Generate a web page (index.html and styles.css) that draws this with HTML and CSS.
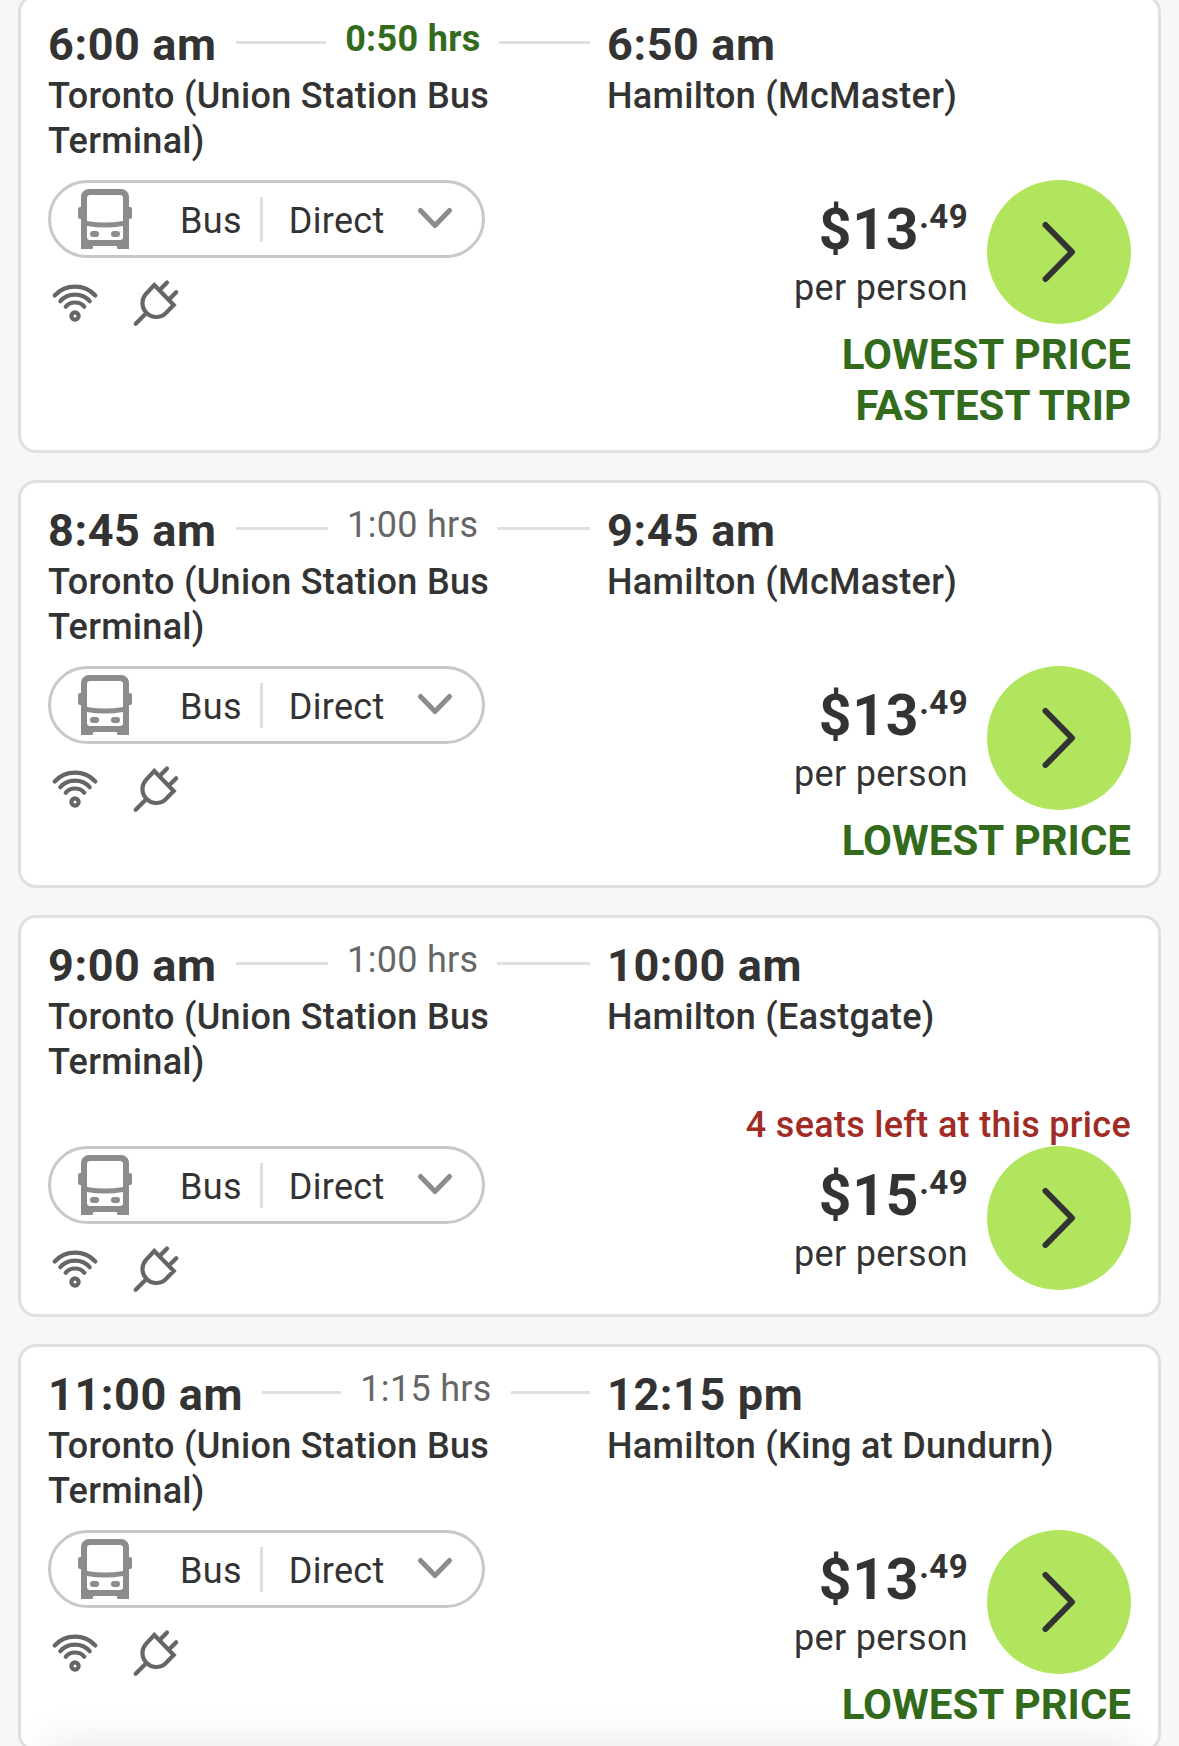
FILE: index.html
```
<!DOCTYPE html>
<html lang="en">
<head>
    <meta charset="UTF-8">
    <meta name="viewport" content="width=device-width, initial-scale=1.0">
    <title>Toronto to Hamilton</title>
    <link rel="stylesheet" href="styles.css">
</head>
<body>
    <svg class="sprite" aria-hidden="true">
        <symbol id="icon-bus" viewBox="0 0 54 60">
            <path fill="currentColor" fill-rule="evenodd" d="M3 8a8 8 0 0 1 8-8h32a8 8 0 0 1 8 8v10h1a2 2 0 0 1 2 2v8a2 2 0 0 1-2 2h-1v30h-10.500a1.500 1.500 0 0 1-1.500-1.500V57H15v1.500a1.500 1.500 0 0 1-1.500 1.500H3V30H2a2 2 0 0 1-2-2v-8a2 2 0 0 1 2-2h1zM9 9v23q18 3 36 0V9a3 3 0 0 0-3-3H12a3 3 0 0 0-3 3zM9 37v11a3 3 0 0 0 3 3h30a3 3 0 0 0 3-3V37q-18 3-36 0z"/>
            <rect x="12" y="42" width="9" height="6" rx="3" fill="currentColor"/>
            <rect x="33" y="42" width="9" height="6" rx="3" fill="currentColor"/>
        </symbol>
        <symbol id="icon-wifi" viewBox="0 0 54 48">
            <g fill="none" stroke="currentColor" stroke-width="4.200" stroke-linecap="round">
                <path d="M6.700 16.500Q15 7.700 27 7.700t20.300 8.800"/>
                <path d="M12.300 22.200Q18 15.700 27 15.700t14.700 6.500"/>
                <path d="M17.700 27.700Q21 23.500 27 23.500t9.300 4.200"/>
                <circle cx="27" cy="37" r="3.600"/>
            </g>
        </symbol>
        <symbol id="icon-plug" viewBox="0 0 48 48">
            <path fill="none" stroke="currentColor" stroke-width="4.200" stroke-linecap="round" d="M22.300 6l19.400 20-8 8.200c-5.500 5.200-13.700 5-19-.2s-5.700-13.500-.7-19.200zM14.200 34.200L3.700 44.700M28.700 10L35 3.500M37.700 19.800l6.500-6.600"/>
        </symbol>
        <symbol id="icon-down" viewBox="0 0 36 24">
            <path fill="none" stroke="currentColor" stroke-width="5" stroke-linecap="round" stroke-linejoin="round" d="M3.500 3.500L18 18.500l14.500-15"/>
        </symbol>
        <symbol id="icon-next" viewBox="0 0 36 66">
            <path fill="none" stroke="currentColor" stroke-width="6" stroke-linecap="round" stroke-linejoin="round" d="M4.500 6l26.500 27-26.500 27"/>
        </symbol>
    </svg>

    <main class="results">
        <section class="trip">
            <div class="route">
                <div class="departure">
                    <div class="time-row">
                        <span class="time">6:00 am</span>
                        <span class="line"></span>
                        <span class="duration fastest">0:50 hrs</span>
                        <span class="line"></span>
                    </div>
                    <p class="place">Toronto (Union Station Bus Terminal)</p>
                </div>
                <div class="arrival">
                    <span class="time">6:50 am</span>
                    <p class="place">Hamilton (McMaster)</p>
                </div>
            </div>
            <div class="details">
                <div class="info">
                    <button class="vehicle">
                        <svg class="bus"><use href="#icon-bus"/></svg>
                        <span class="type">Bus</span>
                        <span class="stops">Direct</span>
                        <svg class="down"><use href="#icon-down"/></svg>
                    </button>
                    <div class="amenities">
                        <svg class="wifi"><use href="#icon-wifi"/></svg>
                        <svg class="plug"><use href="#icon-plug"/></svg>
                    </div>
                </div>
                <div class="fare">
                    <div class="fare-row">
                        <div class="price-box">
                            <div class="price">$13<span class="cents">.49</span></div>
                            <div class="per">per person</div>
                        </div>
                        <button class="next"><svg><use href="#icon-next"/></svg></button>
                    </div>
                    <div class="labels">
                        <div>LOWEST PRICE</div>
                        <div>FASTEST TRIP</div>
                    </div>
                </div>
            </div>
        </section>

        <section class="trip">
            <div class="route">
                <div class="departure">
                    <div class="time-row">
                        <span class="time">8:45 am</span>
                        <span class="line"></span>
                        <span class="duration">1:00 hrs</span>
                        <span class="line"></span>
                    </div>
                    <p class="place">Toronto (Union Station Bus Terminal)</p>
                </div>
                <div class="arrival">
                    <span class="time">9:45 am</span>
                    <p class="place">Hamilton (McMaster)</p>
                </div>
            </div>
            <div class="details">
                <div class="info">
                    <button class="vehicle">
                        <svg class="bus"><use href="#icon-bus"/></svg>
                        <span class="type">Bus</span>
                        <span class="stops">Direct</span>
                        <svg class="down"><use href="#icon-down"/></svg>
                    </button>
                    <div class="amenities">
                        <svg class="wifi"><use href="#icon-wifi"/></svg>
                        <svg class="plug"><use href="#icon-plug"/></svg>
                    </div>
                </div>
                <div class="fare">
                    <div class="fare-row">
                        <div class="price-box">
                            <div class="price">$13<span class="cents">.49</span></div>
                            <div class="per">per person</div>
                        </div>
                        <button class="next"><svg><use href="#icon-next"/></svg></button>
                    </div>
                    <div class="labels">
                        <div>LOWEST PRICE</div>
                    </div>
                </div>
            </div>
        </section>

        <section class="trip">
            <div class="route">
                <div class="departure">
                    <div class="time-row">
                        <span class="time">9:00 am</span>
                        <span class="line"></span>
                        <span class="duration">1:00 hrs</span>
                        <span class="line"></span>
                    </div>
                    <p class="place">Toronto (Union Station Bus Terminal)</p>
                </div>
                <div class="arrival">
                    <span class="time">10:00 am</span>
                    <p class="place">Hamilton (Eastgate)</p>
                </div>
            </div>
            <p class="seats">4 seats left at this price</p>
            <div class="details">
                <div class="info">
                    <button class="vehicle">
                        <svg class="bus"><use href="#icon-bus"/></svg>
                        <span class="type">Bus</span>
                        <span class="stops">Direct</span>
                        <svg class="down"><use href="#icon-down"/></svg>
                    </button>
                    <div class="amenities">
                        <svg class="wifi"><use href="#icon-wifi"/></svg>
                        <svg class="plug"><use href="#icon-plug"/></svg>
                    </div>
                </div>
                <div class="fare">
                    <div class="fare-row">
                        <div class="price-box">
                            <div class="price">$15<span class="cents">.49</span></div>
                            <div class="per">per person</div>
                        </div>
                        <button class="next"><svg><use href="#icon-next"/></svg></button>
                    </div>
                </div>
            </div>
        </section>

        <section class="trip">
            <div class="route">
                <div class="departure">
                    <div class="time-row">
                        <span class="time">11:00 am</span>
                        <span class="line"></span>
                        <span class="duration">1:15 hrs</span>
                        <span class="line"></span>
                    </div>
                    <p class="place">Toronto (Union Station Bus Terminal)</p>
                </div>
                <div class="arrival">
                    <span class="time">12:15 pm</span>
                    <p class="place">Hamilton (King at Dundurn)</p>
                </div>
            </div>
            <div class="details">
                <div class="info">
                    <button class="vehicle">
                        <svg class="bus"><use href="#icon-bus"/></svg>
                        <span class="type">Bus</span>
                        <span class="stops">Direct</span>
                        <svg class="down"><use href="#icon-down"/></svg>
                    </button>
                    <div class="amenities">
                        <svg class="wifi"><use href="#icon-wifi"/></svg>
                        <svg class="plug"><use href="#icon-plug"/></svg>
                    </div>
                </div>
                <div class="fare">
                    <div class="fare-row">
                        <div class="price-box">
                            <div class="price">$13<span class="cents">.49</span></div>
                            <div class="per">per person</div>
                        </div>
                        <button class="next"><svg><use href="#icon-next"/></svg></button>
                    </div>
                    <div class="labels">
                        <div>LOWEST PRICE</div>
                    </div>
                </div>
            </div>
        </section>
    </main>
    <div class="bottom-shadow"></div>
</body>
</html>
```

FILE: styles.css
```
* {
    box-sizing: border-box;
}

body {
    background-color: #f7f7f7;
    color: #333;
    font-family: Roboto, Arial, sans-serif;
    font-size: 36px;
    line-height: 45px;
    letter-spacing: 0.3px;
    margin: 0;
    height: 1746px;
    overflow: hidden;
}

p {
    margin: 0;
}

button {
    font: inherit;
    letter-spacing: inherit;
    color: inherit;
    padding: 0;
    cursor: pointer;
}

.sprite {
    display: none;
}

.results {
    display: flex;
    flex-direction: column;
    gap: 27px;
    margin: -6px 18px 0;
}

.trip {
    background-color: #fff;
    border: 3px solid #e0e0e0;
    border-radius: 18px;
    padding: 21px 27px 24px;
}

.route {
    display: grid;
    grid-template-columns: 542px 1fr;
    column-gap: 17px;
    margin-bottom: 16px;
}

.time-row {
    display: flex;
    align-items: flex-start;
}

.time {
    display: block;
    font-size: 45px;
    font-weight: 700;
    line-height: 54px;
    letter-spacing: 0.6px;
    margin-bottom: 2px;
}

.line {
    flex: 1;
    height: 3px;
    margin-top: 23px;
    margin-left: 19px;
    background-color: #e0e0e0;
}

.duration {
    color: #666;
    margin-top: -1px;
    margin-left: 19px;
}

.duration.fastest {
    color: #336b1d;
    font-weight: 700;
}

.place {
    font-weight: 500;
}

.seats {
    color: #a12b25;
    font-weight: 500;
    line-height: 49px;
    margin-bottom: -4px;
    text-align: right;
}

.details {
    display: flex;
    justify-content: space-between;
    align-items: flex-start;
}

.vehicle {
    display: flex;
    align-items: center;
    width: 437px;
    height: 78px;
    border: 3px solid #c8c8c8;
    border-radius: 39px;
    background-color: #fff;
    padding-left: 27px;
}

.bus {
    width: 54px;
    height: 60px;
    color: #8c8c8c;
}

.type,
.stops {
    padding-top: 3px;
    line-height: 42px;
}

.type {
    margin-left: 48px;
    padding-right: 18px;
    border-right: 3px solid #e0e0e0;
}

.stops {
    margin-left: 26px;
}

.down {
    width: 36px;
    height: 24px;
    margin-left: auto;
    margin-right: 29px;
    color: #8c8c8c;
}

.amenities {
    display: flex;
    gap: 30px;
    height: 45px;
    margin-top: 21px;
    color: #666;
}

.wifi {
    width: 54px;
    height: 48px;
}

.plug {
    width: 48px;
    height: 48px;
}

.fare-row {
    display: flex;
    justify-content: flex-end;
    gap: 19px;
}

.price-box {
    padding-top: 16px;
    text-align: right;
}

.price {
    display: flex;
    justify-content: flex-end;
    align-items: flex-start;
    font-size: 57px;
    font-weight: 700;
    line-height: 67px;
    letter-spacing: 0.8px;
}

.cents {
    font-size: 33px;
    line-height: 39px;
    letter-spacing: 0.4px;
    margin-top: 1px;
}

.per {
    margin-top: 3px;
}

.next {
    display: flex;
    align-items: center;
    justify-content: center;
    width: 144px;
    height: 144px;
    border: none;
    border-radius: 50%;
    background-color: #b1e55d;
}

.next svg {
    width: 36px;
    height: 66px;
}

.labels {
    margin: 5px 0 -5px;
    color: #336b1d;
    font-size: 42px;
    font-weight: 700;
    line-height: 51px;
    letter-spacing: 0;
    text-align: right;
}

/* shadow thrown upwards by the bar under the list */
.bottom-shadow {
    position: fixed;
    top: 100%;
    left: 45px;
    right: 45px;
    height: 60px;
    box-shadow: 0 0 45px rgba(0, 0, 0, 0.11);
}
```
